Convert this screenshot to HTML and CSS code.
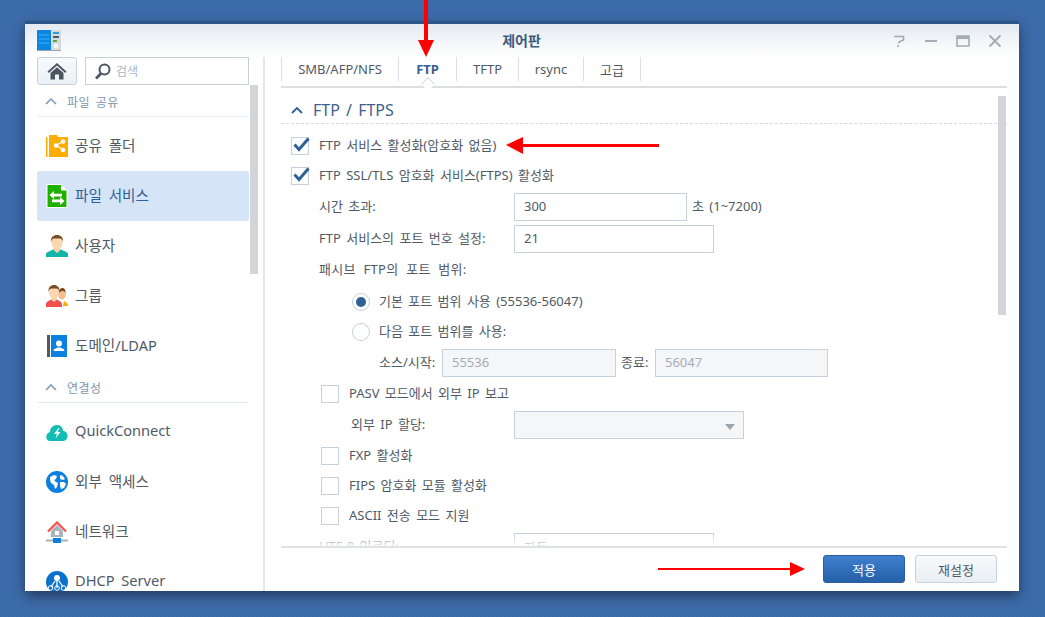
FILE: index.html
```html
<!DOCTYPE html>
<html lang="ko">

<head>
  <meta charset="utf-8">
  <title>제어판</title>
  <link rel="stylesheet" href="styles.css">
</head>

<body>
  <div class="window">
    <div class="titlebar">
      <div class="titlebar-left">
        <svg class="app-icon" width="24" height="21" viewBox="0 0 24 21">
          <rect x="0" y="0" width="24" height="20" fill="#d5dade"/>
          <rect x="0" y="20" width="24" height="1" fill="#9aa3ab"/>
          <rect x="0" y="0" width="14" height="20" fill="#0b86e2"/>
          <path d="M2 5h10M2 9h10M2 13h10" stroke="#3fb0f5" stroke-width="1"/>
          <path d="M16 3h6" stroke="#2b9fd8" stroke-width="2"/>
          <path d="M16 7h6" stroke="#4f5a68" stroke-width="2"/>
          <path d="M16 11h4" stroke="#5aa83a" stroke-width="2"/>
          <circle cx="19" cy="16" r="2.5" fill="#f2f5f7"/>
        </svg>
      </div>
      <div class="title">제어판</div>
      <div class="win-controls">
        <svg width="14" height="14" viewBox="0 0 14 14"><path d="M2 2.5h9.5v3.5l-4.5 2v1.5M6 11v2" fill="none" stroke="#a3abb4" stroke-width="1.6"/></svg>
        <svg width="14" height="14" viewBox="0 0 14 14"><path d="M1 7h12" stroke="#a3abb4" stroke-width="2"/></svg>
        <svg width="14" height="14" viewBox="0 0 14 14"><path d="M1 2h12v10H1z" fill="none" stroke="#a3abb4" stroke-width="1.6"/><path d="M1 3.5h12" stroke="#a3abb4" stroke-width="3"/></svg>
        <svg width="14" height="14" viewBox="0 0 14 14"><path d="M1.5 1.5l11 11M12.5 1.5l-11 11" stroke="#a3abb4" stroke-width="1.8"/></svg>
      </div>
    </div>

    <div class="columns">
      <aside class="sidebar">
        <div class="side-top">
          <button class="home-btn">
            <svg width="20" height="18" viewBox="0 0 20 18"><path d="M10 1L0.5 9.5l1.3 1.4L10 3.6l8.2 7.3 1.3-1.4z" fill="#4a5561"/><path d="M3.5 11L10 5.2l6.500 5.800V17.500h-4.500v-5h-4v5H3.500z" fill="#4a5561"/></svg>
          </button>
          <div class="search">
            <svg width="17" height="17" viewBox="0 0 17 17"><circle cx="10.500" cy="6.500" r="5" fill="none" stroke="#4a5561" stroke-width="2"/><path d="M7 10.500l-5 5" stroke="#4a5561" stroke-width="2.600"/></svg>
            <span>검색</span>
          </div>
        </div>

        <nav class="side-nav">
          <div class="side-group">
            <svg width="12" height="7" viewBox="0 0 12 7"><path d="M1 6l5-5 5 5" fill="none" stroke="#7d99b5" stroke-width="1.600"/></svg>
            파일 공유
          </div>
          <a class="side-item">
            <svg width="22" height="22" viewBox="0 0 22 22">
              <rect x="0" y="2" width="1.500" height="20" fill="#fdae00"/>
              <path d="M3 0h8l1 2h10v20H3z" fill="#fdae00"/>
              <path d="M17 6.500l-7 4 7 4" fill="none" stroke="#fff" stroke-width="1.300"/>
              <circle cx="10" cy="10.500" r="2.300" fill="#fff"/><circle cx="17" cy="6.500" r="2.300" fill="#fff"/><circle cx="17" cy="15" r="2.300" fill="#fff"/>
            </svg>
            공유 폴더
          </a>
          <a class="side-item active">
            <svg width="22" height="24" viewBox="0 0 22 24">
              <path d="M1 .5h14l6 6v17H1z" fill="#20b000" stroke="#fff"/>
              <path d="M15 .5v6h6z" fill="#fff"/>
              <path d="M3.500 11l4.500-4v2.800h8v2.600H8V15zM18.500 17l-4.500 4v-2.800H6v-2.600h8V13z" fill="#fff"/>
            </svg>
            파일 서비스
          </a>
          <a class="side-item">
            <svg width="22" height="22" viewBox="0 0 22 22">
              <path d="M0 22v-3c0-2 5-3 7-4.500h8c2 1.500 7 2.500 7 4.500v3z" fill="#10b5a8"/>
              <path d="M8 12h6v3.500l-3 2.500-3-2.500z" fill="#f7cfa6"/>
              <ellipse cx="11" cy="7.500" rx="5.500" ry="7" fill="#fbd6b0"/>
              <path d="M5 7C4.500 2 7.500 0 11 0s6.500 2 6 7c-.5-2-1.500-3.500-3-3.500H8C6.500 3.500 5.500 5 5 7z" fill="#7a4a22"/>
            </svg>
            사용자
          </a>
          <a class="side-item">
            <svg width="22" height="22" viewBox="0 0 22 22">
              <path d="M17 20l1-4 4 3v2h-5z" fill="#fdae00"/>
              <ellipse cx="16" cy="9" rx="4" ry="5.500" fill="#f2c08e"/>
              <path d="M13 8c0-4 2-5 3.500-5S20 4.500 19.500 8c-.5-1.500-1.500-2-3-2-2 0-3 1-3.500 2z" fill="#7a4a22"/>
              <path d="M0 22v-3c0-2 3-3 5-4.500h6c2 1.500 5 2.500 5 4.500v3z" fill="#f2504f"/>
              <path d="M5.500 12h5v3l-2.500 2-2.500-2z" fill="#f7cfa6"/>
              <ellipse cx="8" cy="7.500" rx="5" ry="6.500" fill="#fbd6b0"/>
              <path d="M2.500 7C2 2 5 0 8 0s6 2 5.500 7c-.5-2-1.500-3.500-3-3.500h-5C4 3.500 3 5 2.500 7z" fill="#7a4a22"/>
            </svg>
            그룹
          </a>
          <a class="side-item">
            <svg width="22" height="22" viewBox="0 0 22 22">
              <rect x="1" y="0" width="3" height="22" fill="#4f5a68"/>
              <rect x="5" y="0" width="16" height="22" fill="#0a80e0"/>
              <circle cx="13" cy="8.500" r="3" fill="#fff"/>
              <path d="M7.500 16c0-2.500 3-2.500 4-3.500h3c1 1 4 1 4 3.500z" fill="#fff"/>
            </svg>
            도메인/LDAP
          </a>

          <div class="side-group">
            <svg width="12" height="7" viewBox="0 0 12 7"><path d="M1 6l5-5 5 5" fill="none" stroke="#7d99b5" stroke-width="1.600"/></svg>
            연결성
          </div>
          <a class="side-item">
            <svg width="22" height="22" viewBox="0 0 22 22">
              <path d="M4 20c-5 0-5-8 0-9 0-5 4-7 7-7 4 0 6 3 6 6 6 0 6 10 0 10z" fill="#12bdb5"/>
              <path d="M12.500 7l-4.500 6h3l-1.500 4.500 5-6.500h-3l2-4z" fill="#fff"/>
            </svg>
            QuickConnect
          </a>
          <a class="side-item">
            <svg width="22" height="22" viewBox="0 0 22 22">
              <circle cx="11" cy="11" r="11" fill="#0a80e0"/>
              <path d="M4 6l4-2 3 1-1 3-2 1 2 2 2 1-1 4-2 2-1-4-3-2-1-3zM14 4l3 1 2 3-2 1-3-1zM14 11l4 0 2 2-2 4-3 1-1-3z" fill="#fff"/>
            </svg>
            외부 액세스
          </a>
          <a class="side-item">
            <svg width="22" height="22" viewBox="0 0 22 22">
              <path d="M11 4l6 6v6H5v-6z" fill="#a9b4bf"/>
              <rect x="9" y="10" width="4" height="4" fill="#fff"/>
              <path d="M2 10.500L11 1.500l9 9" fill="none" stroke="#f2504f" stroke-width="2.200"/>
              <rect x="0" y="18.500" width="22" height="2" fill="#a9b4bf"/>
              <rect x="7" y="17" width="8" height="5" fill="#0a80e0"/>
            </svg>
            네트워크
          </a>
          <a class="side-item">
            <svg width="22" height="22" viewBox="0 0 22 22">
              <circle cx="11" cy="11" r="11" fill="#0a72cc"/>
              <circle cx="11" cy="7" r="3" fill="#fff"/>
              <path d="M11 9v8M9 10l-4 6M13 10l4 6" stroke="#fff" stroke-width="1.300"/>
              <circle cx="4.500" cy="17" r="2.300" fill="none" stroke="#fff"/><circle cx="11" cy="17" r="2.300" fill="none" stroke="#fff"/><circle cx="17.500" cy="17" r="2.300" fill="none" stroke="#fff"/>
            </svg>
            DHCP Server
          </a>
        </nav>
        <div class="side-scroll"></div>
      </aside>

      <main class="main">
        <div class="tabs">
          <a class="tab tab-smb">SMB/AFP/NFS</a>
          <a class="tab tab-ftp active">FTP</a>
          <a class="tab tab-tftp">TFTP</a>
          <a class="tab tab-rsync">rsync</a>
          <a class="tab tab-adv">고급</a>
        </div>

        <div class="panel">
          <div class="panel-head">
            <svg width="12" height="8" viewBox="0 0 12 8"><path d="M1 7l5-5 5 5" fill="none" stroke="#2f5f98" stroke-width="1.800"/></svg>
            FTP / FTPS
          </div>

          <label class="row"><span class="check on"><svg width="20" height="18" viewBox="0 0 20 18"><path d="M3.500 8.500l4.500 5L17.500 2.500" fill="none" stroke="#2f6097" stroke-width="3"/></svg></span>FTP 서비스 활성화(암호화 없음)</label>
          <label class="row"><span class="check on"><svg width="20" height="18" viewBox="0 0 20 18"><path d="M3.500 8.500l4.500 5L17.500 2.500" fill="none" stroke="#2f6097" stroke-width="3"/></svg></span>FTP SSL/TLS 암호화 서비스(FTPS) 활성화</label>

          <div class="row-field">
            <span class="field-label">시간 초과:</span>
            <span class="input w173">300</span>
            <span class="unit">초 (1~7200)</span>
          </div>
          <div class="row-field">
            <span class="field-label">FTP 서비스의 포트 번호 설정:</span>
            <span class="input w200">21</span>
          </div>
          <div class="row plain">패시브 FTP의 포트 범위:</div>

          <div class="radio-group">
            <label class="row"><span class="radio on"></span>기본 포트 범위 사용 (55536-56047)</label>
            <label class="row"><span class="radio"></span>다음 포트 범위를 사용:</label>
            <div class="row-field sub">
              <span class="sub-label">소스/시작:</span>
              <span class="input disabled w174">55536</span>
              <span class="sub-label end">종료:</span>
              <span class="input disabled w173">56047</span>
            </div>
          </div>

          <div class="indent">
            <label class="row"><span class="check"></span>PASV 모드에서 외부 IP 보고</label>
            <div class="row-field">
              <span class="field-label short">외부 IP 할당:</span>
              <span class="input disabled select w230"><i class="caret"></i></span>
            </div>
            <label class="row"><span class="check"></span>FXP 활성화</label>
            <label class="row"><span class="check"></span>FIPS 암호화 모듈 활성화</label>
            <label class="row"><span class="check"></span>ASCII 전송 모드 지원</label>
          </div>
          <div class="row-field">
            <span class="field-label">UTF-8 인코딩:</span>
            <span class="input w200">자동</span>
          </div>

          <div class="panel-fade"></div>
          <div class="panel-scroll"></div>
        </div>

        <div class="footer">
          <button class="btn primary">적용</button>
          <button class="btn">재설정</button>
        </div>
      </main>
    </div>
  </div>

  <!-- red arrows drawn over the screenshot -->
  <svg class="arrows" width="1045" height="617" viewBox="0 0 1045 617">
    <path d="M424 0h4v40h6l-8 17-8-17h6z" fill="#f00"/>
    <path d="M506 145l17-8v7h136v3H523v7z" fill="#f00"/>
    <path d="M658 568h132v-6l15 7-15 7v-6H658z" fill="#f00"/>
  </svg>
</body>

</html>
```

FILE: styles.css
```css
* {
  box-sizing: border-box;
}

body {
  margin: 0;
  height: 617px;
  padding: 21px 0 0 25px;
  overflow: hidden;
  background-color: #3a69a9;
  background-image: repeating-conic-gradient(rgba(255, 255, 255, 0.025) 0 25%, transparent 0 50%);
  background-size: 4px 4px;
  font-family: "Noto Sans", "Noto Sans CJK KR", sans-serif;
  font-size: 13px;
  color: #505a66;
}

.window {
  width: 994px;
  height: 570px;
  background-color: #fff;
  border-top: 3px solid #2d5688;
  box-shadow: 0 5px 12px rgba(0, 0, 0, 0.45);
  display: flex;
  flex-direction: column;
  overflow: hidden;
}

.titlebar {
  height: 33px;
  flex: none;
  padding: 0 17px 0 12px;
  display: grid;
  grid-template-columns: 1fr auto 1fr;
  align-items: center;
  background: linear-gradient(#e5eaf1, #fff);
}

.app-icon {
  display: block;
}

.title {
  padding: 0 0 2px 4px;
  font-size: 14px;
  font-weight: 700;
  color: #3f5b7f;
}

.win-controls {
  display: flex;
  justify-content: flex-end;
  gap: 18px;
}

.columns {
  flex: 1;
  min-height: 0;
  display: flex;
}

/* left column */
.sidebar {
  position: relative;
  width: 240px;
  flex: none;
  padding-left: 12px;
  border-right: 2px solid #e3e5e8;
  display: flex;
  flex-direction: column;
}

.side-top {
  width: 212px;
  height: 28px;
  flex: none;
  display: flex;
  gap: 8px;
}

.home-btn {
  width: 40px;
  height: 28px;
  padding: 0;
  display: flex;
  align-items: center;
  justify-content: center;
  background: linear-gradient(#f8fafc, #ebf0f5);
  border: 1px solid #c6d1de;
  border-radius: 3px;
}

.search {
  flex: 1;
  display: flex;
  align-items: center;
  gap: 5px;
  padding-left: 8px;
  border: 1px solid #c6d1de;
  color: #aab5c1;
  font-size: 12px;
}

.side-nav {
  width: 212px;
  flex: 1;
  min-height: 0;
  overflow: hidden;
}

.side-group {
  height: 32px;
  margin-bottom: 4px;
  padding: 2px 0 0 8px;
  display: flex;
  align-items: center;
  gap: 10px;
  border-bottom: 1px solid #e8edf2;
  font-size: 12px;
  letter-spacing: 0.5px;
  word-spacing: 2px;
  color: #7d95ae;
}

.side-item {
  height: 50px;
  padding: 0 0 4px 9px;
  display: flex;
  align-items: center;
  gap: 7px;
  font-size: 14.6px;
  word-spacing: 3px;
  border-radius: 3px;
}

.side-item svg {
  flex: none;
  margin-top: 4px;
}

.side-item.active {
  background-color: #d5e5f7;
  color: #2f5f98;
}

.side-scroll {
  position: absolute;
  left: 225px;
  top: 28px;
  width: 8px;
  height: 189px;
  background-color: #d3d5d8;
}

/* right column */
.main {
  flex: 1;
  min-width: 0;
  padding: 0 12px 0 16px;
  display: flex;
  flex-direction: column;
}

.tabs {
  position: relative;
  height: 31px;
  flex: none;
  padding-bottom: 6px;
  display: flex;
  border-bottom: 2px solid #dcdee1;
}

.tab {
  height: 24px;
  display: flex;
  align-items: center;
  justify-content: center;
  border-right: 1px solid #d8e0e9;
  font-size: 13px;
}

.tab-smb {
  width: 118px;
  border-left: 1px solid #d8e0e9;
}

.tab-ftp {
  width: 58px;
}

.tab-tftp {
  width: 62px;
}

.tab-rsync {
  width: 65px;
}

.tab-adv {
  width: 57px;
}

.tab.active {
  font-weight: 700;
  color: #3a5f8f;
}

.tab.active::after {
  content: "";
  position: absolute;
  left: 142px;
  bottom: -2px;
  width: 9px;
  height: 9px;
  background-color: #fff;
  border-left: 1px solid #dcdee1;
  border-top: 1px solid #dcdee1;
  transform: translateY(1px) rotate(45deg);
}

.panel {
  position: relative;
  flex: 1;
  min-height: 0;
  overflow: hidden;
  padding-left: 10px;
  word-spacing: 2px;
}

.panel-head {
  height: 36px;
  margin: 0 0 7px -10px;
  padding: 8px 0 0 10px;
  display: flex;
  align-items: center;
  gap: 10px;
  border-bottom: 1px dashed #cfd8e3;
  font-size: 16px;
  color: #40618c;
}

.row {
  height: 30px;
  padding-bottom: 3px;
  display: flex;
  align-items: center;
  gap: 10px;
}

.row.plain {
  padding-left: 28px;
  letter-spacing: 0.3px;
  word-spacing: 4px;
}

.row-field {
  height: 32px;
  padding-left: 28px;
  display: flex;
  align-items: center;
}

.field-label {
  width: 195px;
  flex: none;
  margin-bottom: 3px;
}

.field-label.short {
  padding-left: 30px;
  width: 193px;
}

.unit {
  margin: 0 0 3px 5px;
}

.input {
  height: 28px;
  padding: 0 0 2px 9px;
  display: flex;
  align-items: center;
  border: 1px solid #c6d1de;
  background-color: #fff;
  position: relative;
}

.input.disabled {
  background-color: #f5f6f8;
  color: #a5adb6;
}

.w173 {
  width: 173px;
}

.w174 {
  width: 174px;
}

.w200 {
  width: 200px;
}

.w230 {
  width: 230px;
}

.caret {
  position: absolute;
  right: 8px;
  top: 12px;
  border-left: 5.500px solid transparent;
  border-right: 5.500px solid transparent;
  border-top: 6px solid #9aa4af;
}

.check {
  width: 18px;
  height: 18px;
  flex: none;
  position: relative;
  margin-top: 3px;
  border: 1px solid #c6d1de;
  background-color: #fff;
}

.check svg {
  position: absolute;
  left: -1px;
  top: -2px;
}

.radio-group {
  margin-top: 2px;
  padding-left: 61px;
}

.radio-group .row {
  gap: 9px;
}

.radio {
  width: 18px;
  height: 18px;
  flex: none;
  position: relative;
  margin-top: 3px;
  border: 1px solid #c6d1de;
  border-radius: 50%;
  background-color: #fff;
}

.radio.on::after {
  content: "";
  position: absolute;
  left: 3px;
  top: 3px;
  width: 10px;
  height: 10px;
  border-radius: 50%;
  background-color: #2f6097;
}

.row-field.sub {
  padding-left: 27px;
}

.sub-label {
  width: 63px;
  flex: none;
  margin-bottom: 3px;
}

.sub-label.end {
  width: 39px;
  padding-left: 5px;
}

.indent {
  padding-left: 30px;
}

.indent .row-field {
  padding-left: 0;
}

.panel-fade {
  position: absolute;
  left: 0;
  right: 0;
  bottom: 0;
  height: 10px;
  background: linear-gradient(rgba(255, 255, 255, 0.2), rgba(255, 255, 255, 0.9));
}

.panel-scroll {
  position: absolute;
  right: 1px;
  top: 8px;
  width: 8px;
  height: 219px;
  background-color: #d3d5d8;
}

.footer {
  height: 45px;
  flex: none;
  padding: 7px 10px 0 0;
  display: flex;
  justify-content: flex-end;
  gap: 10px;
  border-top: 2px solid #e0e1e3;
}

.btn {
  width: 82px;
  height: 28px;
  padding: 0;
  font-family: inherit;
  font-size: 13px;
  color: #505a66;
  background: linear-gradient(#f8fafc, #e9eff4);
  border: 1px solid #c6d1de;
  border-radius: 3px;
}

.btn.primary {
  color: #fff;
  background: linear-gradient(#3f80ce, #2560a8);
  border-color: #2a5f9f;
}

.arrows {
  position: absolute;
  left: 0;
  top: 0;
  pointer-events: none;
}
```
